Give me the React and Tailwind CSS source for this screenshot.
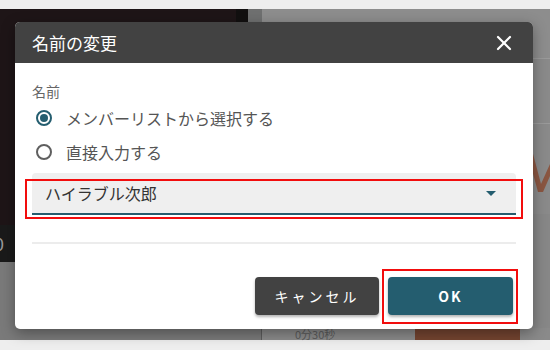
import React, { useState } from 'react';
import { X } from 'lucide-react';

const jp = { fontFamily: '"Noto Sans CJK JP", "Noto Sans", sans-serif' };

const Radio = ({ checked, label, onSelect }) => (
  <button
    type="button"
    onClick={onSelect}
    className="flex h-[34px] items-center gap-[14px] pl-[4px] text-[16px] text-[#555555]"
  >
    <span
      className={`flex h-[16px] w-[16px] items-center justify-center rounded-full border-2 ${
        checked ? 'border-[#245d6f]' : 'border-[#5f5f5f]'
      }`}
    >
      {checked && <span className="h-[8px] w-[8px] rounded-full bg-[#245d6f]" />}
    </span>
    {label}
  </button>
);

const Backdrop = () => (
  <div className="flex h-[350px] w-[550px] flex-col bg-[#eeeeee]">
    <div className="h-[9px]" />
    <div className="flex flex-1">
      {/* left: dimmed video thumbnail */}
      <div className="flex w-[262px] flex-col">
        <div className="flex flex-1 bg-[#1e1517]">
          <div className="flex-1" />
          <div className="w-[12px] bg-[#121010]" />
          <div className="w-[14px] bg-[#6f7070]" />
        </div>
        <div className="flex h-[37px] items-center bg-[#1a1a1a] text-[18px] text-[#9a9a9a]">
          <span className="-ml-[6px]">0</span>
        </div>
        <div className="flex h-[78px]">
          <div className="flex-1 bg-[#7a7a7a]" />
          <div className="w-[1px] bg-[#5c5c5c]" />
        </div>
      </div>
      {/* right: dimmed panel */}
      <div className="flex flex-1 flex-col bg-[#8a8a8a]">
        <div className="h-[49px] bg-[#8d8d8d]" />
        <div className="h-[1px] bg-[#9a9a9a]" />
        <div className="h-[64px]" />
        <div className="h-[1px] bg-[#9a9a9a]" />
        <div className="flex h-[90px] justify-end">
          <svg className="mt-[26px]" width="18" height="42" viewBox="0 0 18 42">
            <path d="M0 0 L9 34 L18 14 L18 26 L11 42 L6 42 L0 20 Z" fill="#8a5641" />
          </svg>
        </div>
        <div className="flex-1 bg-[#878787]" />
        <div className="flex h-[12px] items-end">
          <span className="ml-[33px] text-[11px] leading-[12px] text-[#5a5a5a]" style={jp}>0分30秒</span>
          <div className="ml-auto mr-[30px] h-[12px] w-[105px] bg-[#744430]" />
        </div>
      </div>
    </div>
    <div className="h-[10px]" />
  </div>
);

export default function App() {
  const [mode, setMode] = useState('list');

  return (
    <div className="relative h-[350px] w-[550px] overflow-hidden" style={jp}>
      <Backdrop />

      <div className="absolute left-[15px] top-[22px] flex h-[307px] w-[518px] flex-col rounded-[5px] bg-white shadow-[0_4px_14px_rgba(0,0,0,0.35)]">
        <div className="flex h-[41px] items-center justify-between rounded-t-[5px] bg-[#424242] pl-[17px] pr-[17px]">
          <h2 className="text-[17px] text-white">名前の変更</h2>
          <X className="h-[24px] w-[24px] text-white" strokeWidth={2.2} />
        </div>

        <div className="flex flex-1 flex-col px-[17px] pt-[18px]">
          <div className="h-[20px] text-[14px] leading-[20px] text-[#666666]">名前</div>
          <Radio checked={mode === 'list'} label="メンバーリストから選択する" onSelect={() => setMode('list')} />
          <Radio checked={mode === 'direct'} label="直接入力する" onSelect={() => setMode('direct')} />

          <div className="relative mt-[4px] flex h-[42px] items-center rounded-t-[4px] border-b-2 border-[#255c6e] bg-[#efefef] pl-[13px] pr-[20px]">
            <span className="text-[16px] text-[#333333]">ハイラブル次郎</span>
            <span className="ml-auto h-0 w-0 border-x-[5px] border-t-[5px] border-x-transparent border-t-[#245d6f]" />
            <div className="absolute -bottom-[6px] -left-[7px] -right-[7px] top-[6px] border-2 border-[#f20d0d]" />
          </div>

          <div className="mt-[27px] h-[2px] bg-[#ececec]" />

          <div className="mt-[33px] flex justify-end gap-[9px] pr-[3px]">
            <button className="h-[38px] w-[124px] rounded-[4px] bg-[#424242] text-[14px] tracking-[3px] text-white shadow-[0_2px_3px_rgba(0,0,0,0.3)]">
              キャンセル
            </button>
            <div className="relative">
              <button className="h-[38px] w-[125px] rounded-[4px] bg-[#245d6f] text-[14px] font-bold tracking-[2px] text-white shadow-[0_2px_3px_rgba(0,0,0,0.3)]">
                OK
              </button>
              <div className="absolute -bottom-[9px] -left-[6px] -right-[5px] -top-[8px] border-2 border-[#f20d0d]" />
            </div>
          </div>
        </div>
      </div>
    </div>
  );
}
